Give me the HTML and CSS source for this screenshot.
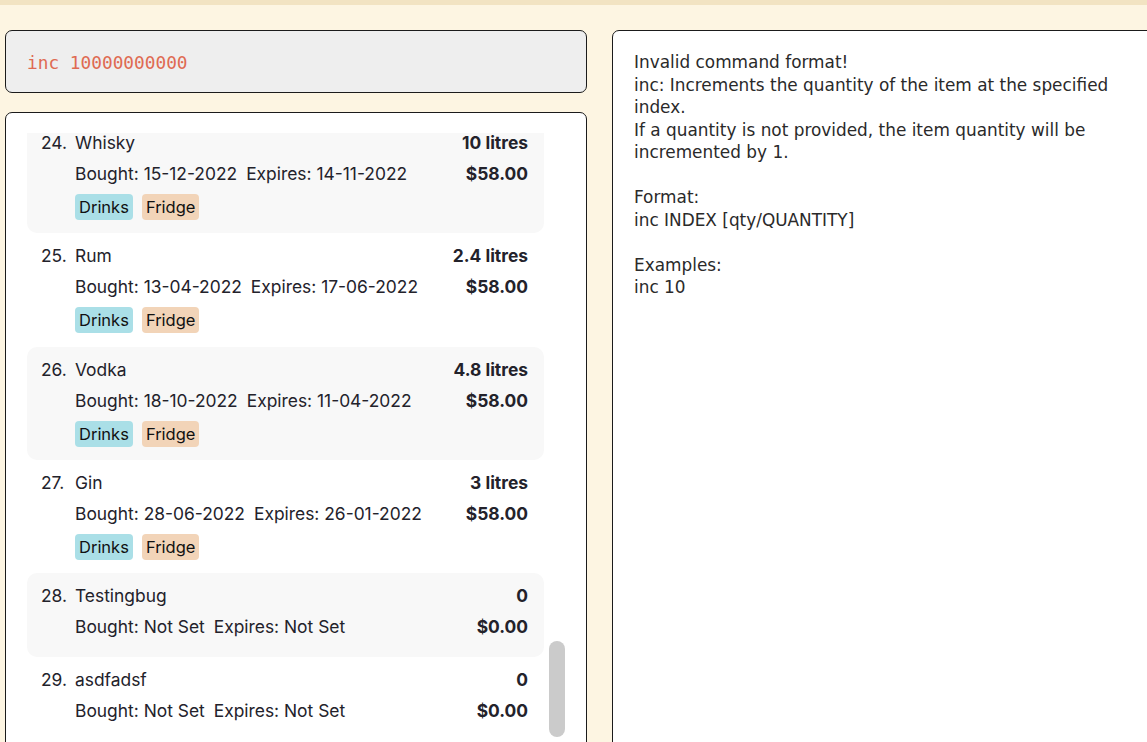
FILE: index.html
```html
<!DOCTYPE html>
<html>
<head>
<meta charset="utf-8">
<link rel="stylesheet" href="styles.css">
</head>
<body>
<div class="topbar"></div>
<div class="main">
  <div class="left">
    <div class="cmd">inc 10000000000</div>
    <div class="listbox">
      <div class="viewport">
        <div class="list" style="margin-top:-13px">
          <div class="card card--alt">
            <div class="idx">24.</div>
            <div class="body">
              <div class="row"><span class="name">Whisky</span><span class="qty">10 litres</span></div>
              <div class="row"><span class="dates"><span>Bought: 15-12-2022</span><span>Expires: 14-11-2022</span></span><span class="qty">$58.00</span></div>
              <div class="tags"><span class="tag tag--drinks">Drinks</span><span class="tag tag--fridge">Fridge</span></div>
            </div>
          </div>
          <div class="card">
            <div class="idx">25.</div>
            <div class="body">
              <div class="row"><span class="name">Rum</span><span class="qty">2.4 litres</span></div>
              <div class="row"><span class="dates"><span>Bought: 13-04-2022</span><span>Expires: 17-06-2022</span></span><span class="qty">$58.00</span></div>
              <div class="tags"><span class="tag tag--drinks">Drinks</span><span class="tag tag--fridge">Fridge</span></div>
            </div>
          </div>
          <div class="card card--alt">
            <div class="idx">26.</div>
            <div class="body">
              <div class="row"><span class="name">Vodka</span><span class="qty">4.8 litres</span></div>
              <div class="row"><span class="dates"><span>Bought: 18-10-2022</span><span>Expires: 11-04-2022</span></span><span class="qty">$58.00</span></div>
              <div class="tags"><span class="tag tag--drinks">Drinks</span><span class="tag tag--fridge">Fridge</span></div>
            </div>
          </div>
          <div class="card">
            <div class="idx">27.</div>
            <div class="body">
              <div class="row"><span class="name">Gin</span><span class="qty">3 litres</span></div>
              <div class="row"><span class="dates"><span>Bought: 28-06-2022</span><span>Expires: 26-01-2022</span></span><span class="qty">$58.00</span></div>
              <div class="tags"><span class="tag tag--drinks">Drinks</span><span class="tag tag--fridge">Fridge</span></div>
            </div>
          </div>
          <div class="card card--alt card--notags">
            <div class="idx">28.</div>
            <div class="body">
              <div class="row"><span class="name">Testingbug</span><span class="qty">0</span></div>
              <div class="row"><span class="dates"><span>Bought: Not Set</span><span>Expires: Not Set</span></span><span class="qty">$0.00</span></div>
            </div>
          </div>
          <div class="card card--notags">
            <div class="idx">29.</div>
            <div class="body">
              <div class="row"><span class="name">asdfadsf</span><span class="qty">0</span></div>
              <div class="row"><span class="dates"><span>Bought: Not Set</span><span>Expires: Not Set</span></span><span class="qty">$0.00</span></div>
            </div>
          </div>
        </div>
      </div>
      <div class="track"><div class="thumb" style="margin-top:528px"></div></div>
    </div>
  </div>
  <div class="result">
    <div class="result-text">Invalid command format!
inc: Increments the quantity of the item at the specified index.
If a quantity is not provided, the item quantity will be incremented by 1.

Format:
inc INDEX [qty/QUANTITY]

Examples:
inc 10</div>
  </div>
</div>
</body>
</html>
```
FILE: styles.css
```css
html, body {
  margin: 0;
  padding: 0;
}
body {
  background: #fdf5e2;
  width: 1147px;
  height: 742px;
  overflow: hidden;
  font-family: "Inter", "Liberation Sans", sans-serif;
  color: #23222b;
}
.topbar {
  height: 5px;
  background: #f2e3c2;
}
.main {
  display: flex;
  gap: 25px;
  padding: 25px 0 0 5px;
  height: 712px;
  overflow: hidden;
}
.left {
  width: 582px;
  flex: none;
  display: flex;
  flex-direction: column;
  gap: 19px;
}
.cmd {
  box-sizing: border-box;
  height: 63px;
  flex: none;
  background: #eeeeee;
  border: 1px solid #1b1b1b;
  border-radius: 7px;
  padding: 2px 0 0 21px;
  display: flex;
  align-items: center;
  font-family: "DejaVu Sans Mono", "Liberation Mono", monospace;
  font-size: 17.8px;
  color: #df6a52;
}
.listbox {
  box-sizing: border-box;
  height: 660px;
  flex: none;
  background: #ffffff;
  border: 1px solid #1b1b1b;
  border-radius: 7px;
  display: flex;
}
.viewport {
  margin-top: 20px;
  padding-left: 21px;
  width: 517px;
  overflow: hidden;
}
.card {
  display: flex;
  box-sizing: border-box;
  width: 517px;
  padding: 12px 16px 13.3px 14px;
  border-radius: 10px;
  font-size: 17.4px;
}
.card--alt {
  background: #f8f8f8;
}
.card--notags {
  padding-bottom: 19px;
}
.idx {
  width: 34px;
  flex: none;
  line-height: 22px;
}
.body {
  flex: 1;
  display: flex;
  flex-direction: column;
  gap: 9px;
}
.row {
  display: flex;
  justify-content: space-between;
  line-height: 22px;
  height: 22px;
}
.dates {
  display: flex;
  gap: 9px;
}
.qty {
  font-weight: 700;
}
.tags {
  display: flex;
  gap: 9px;
}
.tag {
  height: 26px;
  line-height: 26px;
  padding: 0 4px;
  border-radius: 4px;
  font-size: 16.5px;
  color: #111;
}
.tag--drinks {
  background: #aadfe7;
}
.tag--fridge {
  background: #f2d4b8;
}
.track {
  margin-left: 5px;
  width: 16px;
}
.thumb {
  height: 96px;
  background: #cbcbcb;
  border-radius: 8px;
}
.result {
  box-sizing: border-box;
  width: 560px;
  height: 760px;
  flex: none;
  background: #ffffff;
  border: 1px solid #1b1b1b;
  border-radius: 7px;
  padding: 20px 0 0 21px;
}
.result-text {
  width: 495px;
  white-space: pre-wrap;
  font-family: "DejaVu Sans", sans-serif;
  font-size: 16.9px;
  line-height: 22.5px;
  color: #2a2a2a;
}
```
